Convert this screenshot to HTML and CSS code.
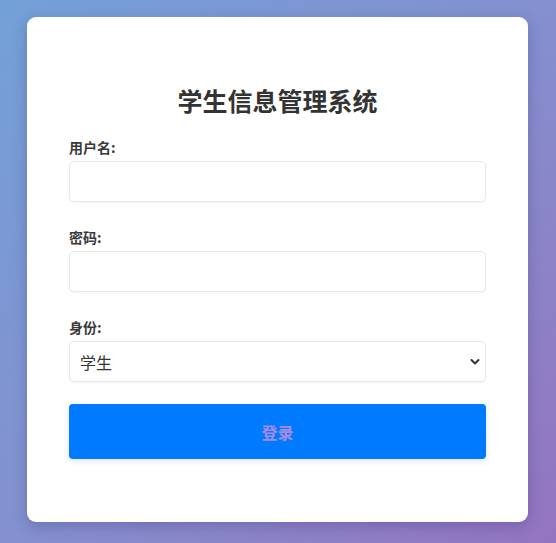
FILE: index.html
```html
<!DOCTYPE html>
<html lang="zh-CN">
<head>
<meta charset="utf-8">
<title>学生信息管理系统</title>
<link rel="stylesheet" href="styles.css">
</head>
<body>
<div class="page">
  <form class="card">
    <h2 class="title">学生信息管理系统</h2>
    <div class="group">
      <label class="label" for="u">用户名:</label>
      <input class="field" id="u" type="text">
    </div>
    <div class="group">
      <label class="label" for="p">密码:</label>
      <input class="field" id="p" type="password">
    </div>
    <div class="group">
      <label class="label" for="r">身份:</label>
      <div class="select-wrap">
        <select class="field select" id="r">
          <option>学生</option>
          <option>教师</option>
          <option>管理员</option>
        </select>
        <svg class="chev" width="10" height="8" viewBox="0 0 10 8"><path d="M1.5 2 L5 5.5 L8.5 2" fill="none" stroke="#333" stroke-width="2" stroke-linecap="round" stroke-linejoin="round"/></svg>
      </div>
    </div>
    <button class="btn" type="button">登录</button>
  </form>
</div>
</body>
</html>
```
FILE: styles.css
```css
html, body {
  margin: 0;
  padding: 0;
}
body {
  width: 556px;
  height: 543px;
  overflow: hidden;
  background: linear-gradient(135deg, #73a0d8 0%, #8490cf 50%, #9474c0 100%);
  font-family: "Noto Sans CJK SC", "Noto Sans", sans-serif;
  color: #333;
}
.page {
  display: flex;
  justify-content: center;
  padding-top: 17px;
  padding-right: 1px;
}
.card {
  box-sizing: border-box;
  width: 501px;
  height: 505px;
  background: #fff;
  border-radius: 9px;
  box-shadow: 0 4px 14px rgba(40, 30, 90, 0.25);
  padding: 69px 42px 0 42px;
  display: flex;
  flex-direction: column;
}
.title {
  margin: 0 0 23px 0;
  font-size: 25px;
  line-height: 28px;
  font-weight: 700;
  text-align: center;
  color: #333;
}
.group {
  display: flex;
  flex-direction: column;
  gap: 4px;
  margin-bottom: 25px;
}
.group:nth-of-type(3) {
  margin-bottom: 22px;
}
.label {
  font-size: 14px;
  line-height: 20px;
  font-weight: 700;
  color: #3a3a3a;
}
.field {
  box-sizing: border-box;
  width: 100%;
  height: 41px;
  border: 1px solid #e8e8e8;
  border-radius: 5px;
  background: #fff;
  font-family: inherit;
  font-size: 16px;
  color: #333;
  padding: 0 10px;
  outline: none;
  box-shadow: 0 1px 2px rgba(0, 0, 0, 0.05);
}
.select-wrap {
  position: relative;
}
.select {
  appearance: none;
  -webkit-appearance: none;
}
.chev {
  position: absolute;
  right: 6px;
  top: 17px;
  pointer-events: none;
}
.btn {
  height: 55px;
  width: 100%;
  border: none;
  border-radius: 4px;
  background: #007bff;
  color: #a98ae6;
  font-family: inherit;
  font-size: 16px;
  font-weight: 700;
  cursor: pointer;
  box-shadow: 0 2px 6px rgba(0, 80, 200, 0.15);
}
```
